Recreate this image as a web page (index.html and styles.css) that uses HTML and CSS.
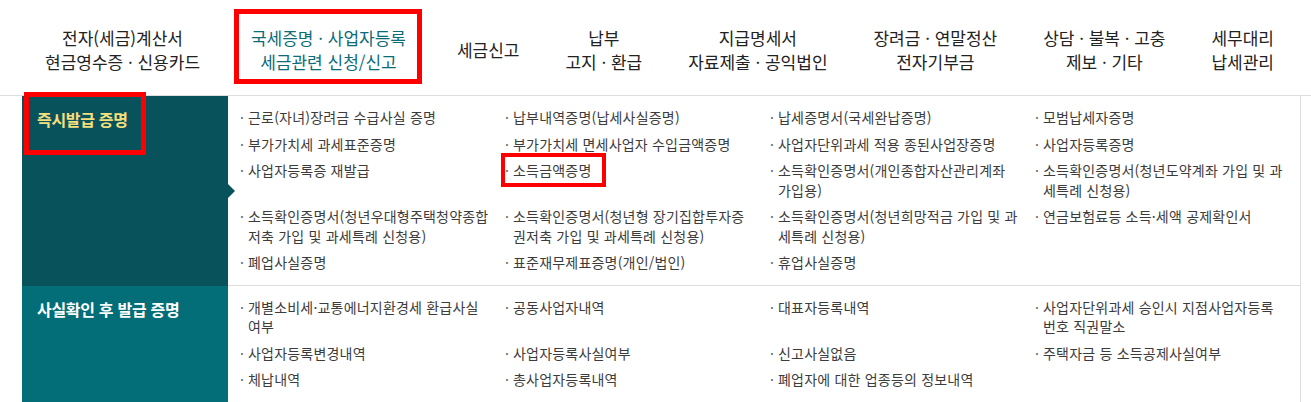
FILE: index.html
```html
<!DOCTYPE html>
<html lang="ko">
<head>
    <meta charset="UTF-8">
    <title>국세증명 · 사업자등록 세금관련 신청/신고</title>
    <link rel="stylesheet" href="styles.css">
</head>
<body>

    <header class="gnb">
        <a class="gnb-item" href="#">전자(세금)계산서<br>현금영수증 · 신용카드</a>
        <a class="gnb-item is-active" href="#">국세증명 · 사업자등록<br>세금관련 신청/신고<span class="mark mark-gnb"></span></a>
        <a class="gnb-item" href="#">세금신고</a>
        <a class="gnb-item" href="#">납부<br>고지 · 환급</a>
        <a class="gnb-item" href="#">지급명세서<br>자료제출 · 공익법인</a>
        <a class="gnb-item" href="#">장려금 · 연말정산<br>전자기부금</a>
        <a class="gnb-item" href="#">상담 · 불복 · 고충<br>제보 · 기타</a>
        <a class="gnb-item" href="#">세무대리<br>납세관리</a>
    </header>

    <div class="cert">
        <section class="cert-row cert-row-now">
            <h3 class="cert-title">즉시발급 증명<span class="mark mark-title"></span></h3>
            <ul class="cert-list">
                <li>근로(자녀)장려금 수급사실 증명</li>
                <li>납부내역증명(납세사실증명)</li>
                <li>납세증명서(국세완납증명)</li>
                <li>모범납세자증명</li>
                <li>부가가치세 과세표준증명</li>
                <li>부가가치세 면세사업자 수입금액증명</li>
                <li>사업자단위과세 적용 종된사업장증명</li>
                <li>사업자등록증명</li>
                <li>사업자등록증 재발급</li>
                <li>소득금액증명<span class="mark mark-item"></span></li>
                <li>소득확인증명서(개인종합자산관리계좌 <span class="nw">가입용)</span></li>
                <li>소득확인증명서(청년도약계좌 가입 및 과세특례 신청용)</li>
                <li>소득확인증명서(청년우대형주택청약종합저축 가입 및 과세특례 신청용)</li>
                <li>소득확인증명서(청년형 장기집합투자증<span class="nw">권저축</span> 가입 및 과세특례 신청용)</li>
                <li>소득확인증명서(청년희망적금 가입 및 과세특례 신청용)</li>
                <li>연금보험료등 소득·세액 공제확인서</li>
                <li>폐업사실증명</li>
                <li>표준재무제표증명(개인/법인)</li>
                <li>휴업사실증명</li>
            </ul>
        </section>

        <section class="cert-row cert-row-check">
            <h3 class="cert-title">사실확인 후 발급 증명</h3>
            <ul class="cert-list">
                <li>개별소비세·교통에너지환경세 환급사실<span class="nw">여부</span></li>
                <li>공동사업자내역</li>
                <li>대표자등록내역</li>
                <li>사업자단위과세 승인시 지점사업자등록<span class="nw">번호</span> 직권말소</li>
                <li>사업자등록변경내역</li>
                <li>사업자등록사실여부</li>
                <li>신고사실없음</li>
                <li>주택자금 등 소득공제사실여부</li>
                <li>체납내역</li>
                <li>총사업자등록내역</li>
                <li>폐업자에 대한 업종등의 정보내역</li>
            </ul>
        </section>
    </div>

</body>
</html>
```

FILE: styles.css
```css
body {
    margin: 0;
    background-color: #fff;
    font-family: "Noto Sans CJK KR", "Noto Sans", sans-serif;
    color: #444;
}

/* top menu */
.gnb {
    display: flex;
    align-items: center;
    justify-content: space-between;
    height: 96px;
    box-sizing: border-box;
    padding: 5px 37px 0 45px;
    border-bottom: 1px solid #ddd;
}

.gnb-item {
    position: relative;
    font-size: 17px;
    line-height: 24px;
    color: #222;
    text-align: center;
    text-decoration: none;
}

.gnb-item.is-active {
    padding: 9px 5px 6px;
    border-bottom: 3px solid #0a7c85;
    color: #0b6c77;
}

/* red highlight boxes */
.mark {
    position: absolute;
    border: 5px solid #f00;
    pointer-events: none;
}

.mark-gnb {
    top: -8px;
    left: -12px;
    right: -11px;
    bottom: -4px;
}

.mark-title {
    top: -4px;
    left: 2px;
    width: 122px;
    height: 63px;
    box-sizing: border-box;
}

.mark-item {
    top: -8px;
    left: -4px;
    width: 105px;
    height: 34px;
    box-sizing: border-box;
    border-width: 4px;
    text-indent: 0;
}

/* certificate panel */
.cert {
    margin: 0 10px 0 22px;
}

.cert-row {
    display: flex;
}

.cert-title {
    position: relative;
    flex: 0 0 206px;
    margin: 0;
    padding: 13px 15px;
    box-sizing: border-box;
    font-size: 16px;
    line-height: 20px;
    font-weight: bold;
    letter-spacing: -0.3px;
    color: #fff;
}

.cert-row-now .cert-title {
    background-color: #08525c;
    color: #f5df7d;
}

.cert-row-now .cert-title::after {
    content: "";
    position: absolute;
    top: 50%;
    right: -7px;
    margin-top: -7px;
    border-top: 7px solid transparent;
    border-bottom: 7px solid transparent;
    border-left: 7px solid #08525c;
}

.cert-row-check .cert-title {
    background-color: #036d78;
}

.cert-list {
    flex: 1;
    display: grid;
    grid-template-columns: repeat(4, 1fr);
    row-gap: 7px;
    align-items: start;
    margin: 0;
    padding: 12px 0 12px 12px;
    list-style: none;
    border-right: 1px solid #ddd;
    border-bottom: 1px solid #ddd;
    font-size: 14px;
    line-height: 19.5px;
    letter-spacing: 0.2px;
    color: #3c3c3c;
}

.cert-list li {
    position: relative;
    padding: 0 12px 0 8px;
    text-indent: -8px;
}

.cert-list li::before {
    content: "·";
    display: inline-block;
    width: 8px;
    text-indent: 0;
    color: #666;
}

.nw {
    white-space: nowrap;
}
```
